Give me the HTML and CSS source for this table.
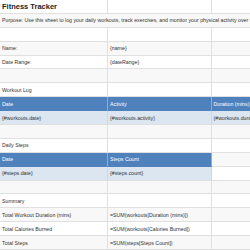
FILE: index.html
```html
<!DOCTYPE html>
<html>
<head>
<meta charset="utf-8">
<link rel="stylesheet" href="styles.css">
</head>
<body>
<div class="sheet">
  <div class="cell title">Fitness Tracker</div><div class="cell"></div><div class="cell"></div>
  <div class="cell alt span3">Purpose: Use this sheet to log your daily workouts, track exercises, and monitor your physical activity over time.</div>
  <div class="cell"></div><div class="cell"></div><div class="cell"></div>
  <div class="cell alt">Name:</div><div class="cell alt">{name}</div><div class="cell alt"></div>
  <div class="cell">Date Range:</div><div class="cell">{dateRange}</div><div class="cell"></div>
  <div class="cell alt"></div><div class="cell alt"></div><div class="cell alt"></div>
  <div class="cell">Workout Log</div><div class="cell"></div><div class="cell"></div>
  <div class="cell head">Date</div><div class="cell head">Activity</div><div class="cell head">Duration (mins)</div>
  <div class="cell data">{#workouts.date}</div><div class="cell data">{#workouts.activity}</div><div class="cell data">{#workouts.duration}</div>
  <div class="cell alt"></div><div class="cell alt"></div><div class="cell alt"></div>
  <div class="cell">Daily Steps</div><div class="cell"></div><div class="cell"></div>
  <div class="cell head">Date</div><div class="cell head">Steps Count</div><div class="cell alt"></div>
  <div class="cell data">{#steps.date}</div><div class="cell data">{#steps.count}</div><div class="cell"></div>
  <div class="cell alt"></div><div class="cell alt"></div><div class="cell alt"></div>
  <div class="cell">Summary</div><div class="cell"></div><div class="cell"></div>
  <div class="cell alt">Total Workout Duration (mins)</div><div class="cell alt">=SUM(workouts[Duration (mins)])</div><div class="cell alt"></div>
  <div class="cell">Total Calories Burned</div><div class="cell">=SUM(workouts[Calories Burned])</div><div class="cell"></div>
  <div class="cell alt">Total Steps</div><div class="cell alt">=SUM(steps[Steps Count])</div><div class="cell alt"></div>
</div>
</body>
</html>
```

FILE: styles.css
```css
html, body {
  margin: 0;
  padding: 0;
  background: #ffffff;
  overflow: hidden;
}
.sheet {
  display: grid;
  grid-template-columns: 108px 103.5px 103.5px;
  grid-auto-rows: 13.9px;
  font-family: "Liberation Sans", Arial, sans-serif;
  font-size: 5.25px;
  color: #333333;
}
.cell {
  box-sizing: border-box;
  border-right: 1px solid #e0e0e0;
  border-bottom: 1px solid #e0e0e0;
  padding-left: 2px;
  display: flex;
  align-items: center;
  white-space: nowrap;
  overflow: visible;
  background: #ffffff;
}
.alt {
  background: #f8f8f8;
}
.span3 {
  grid-column: span 3;
}
.title {
  font-size: 7.5px;
  font-weight: bold;
  color: #222222;
}
.head {
  background: #4f81bd;
  color: #ffffff;
  border-right-color: #8fabd6;
  border-bottom-color: #4f81bd;
}
.data {
  background: #dce6f1;
  border-right-color: #d0d7e0;
}
```
